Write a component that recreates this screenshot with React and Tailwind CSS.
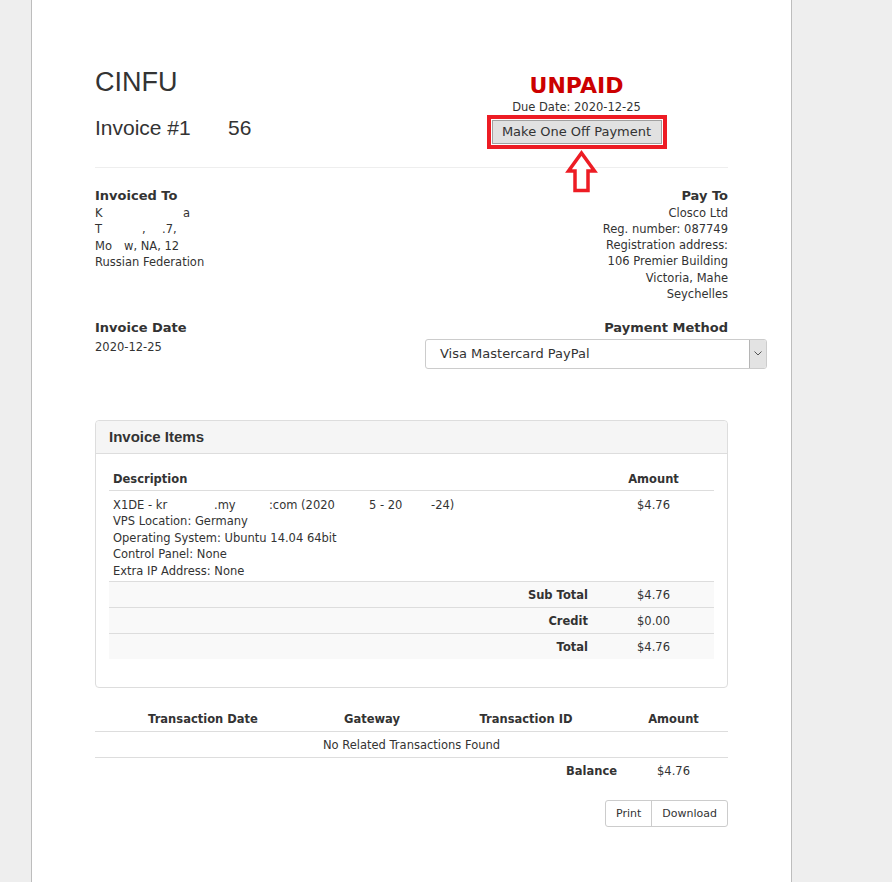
import React from "react";

const body = "font-['DejaVu_Sans',Verdana,sans-serif]";
const arial = "font-['Liberation_Sans',Arial,sans-serif]";

function UpArrow() {
  return (
    <svg
      className="absolute left-[72px] top-[29px]"
      width="38"
      height="46"
      viewBox="0 0 38 46"
    >
      <polygon
        points="18.5,5 31.5,23 25,23 25,42.5 12,42.5 12,23 5.5,23"
        fill="white"
        stroke="#ed1c24"
        strokeWidth="3.5"
        strokeLinejoin="miter"
      />
    </svg>
  );
}

function SumRow({ label, value }) {
  return (
    <div className="flex h-[26px] items-center border-t border-[#ddd] bg-[#f9f9f9]">
      <div className="flex-1 pr-[5px] text-right font-bold">{label}</div>
      <div className="w-[121px] text-center">{value}</div>
    </div>
  );
}

export default function App() {
  return (
    <div className={`min-h-screen bg-[#eeeeee] ${body} text-[11.5px] leading-[16.5px] text-[#333]`}>
      <div className="ml-[31px] min-h-screen w-[761px] border-x border-[#bdbdbd] bg-white pl-[63px] pr-[63px] pt-[67px] pb-10">
        {/* header */}
        <div className="flex items-start">
          <div className={`flex-1 ${arial}`}>
            <div className="text-[27px] leading-[31px]">CINFU</div>
            <div className="mt-[19px] whitespace-nowrap text-[21px] leading-[22px]">
              <span className="inline-block w-[133px]">Invoice #1</span>56
            </div>
          </div>
          <div className="flex w-[303px] flex-col items-center">
            <div className="mt-[5px] text-[22px] font-bold leading-[28px] text-[#cc0000]">UNPAID</div>
            <div className="leading-[14px]">Due Date: 2020-12-25</div>
            <div className="relative mt-px border-4 border-[#ed1c24] p-px">
              <div className="flex h-[24px] w-[170px] items-center justify-center border border-[#a0a0a0] bg-[#e1e1e1] text-[13px] text-[#333]">
                Make One Off Payment
              </div>
              <UpArrow />
            </div>
          </div>
        </div>

        <div className="mt-[18px] border-t border-[#eee]" />

        {/* addresses */}
        <div className="mt-[20px] flex items-start justify-between">
          <div>
            <div className="text-[13px] font-bold">Invoiced To</div>
            <div className="whitespace-nowrap">
              <span className="inline-block w-[88px]">K</span>a
            </div>
            <div className="whitespace-nowrap">
              <span className="inline-block w-[47px]">T</span>
              <span className="inline-block w-[20px]">,</span>.7,
            </div>
            <div className="whitespace-nowrap">
              <span className="inline-block w-[29px]">Mo</span>w, NA, 12
            </div>
            <div>Russian Federation</div>
          </div>
          <div className="text-right leading-[16.3px]">
            <div className="text-[13px] font-bold leading-[16.5px]">Pay To</div>
            <div>Closco Ltd</div>
            <div>Reg. number: 087749</div>
            <div>Registration address:</div>
            <div>106 Premier Building</div>
            <div>Victoria, Mahe</div>
            <div>Seychelles</div>
          </div>
        </div>

        {/* date + payment method */}
        <div className="mt-[18px] flex items-start">
          <div className="flex-1">
            <div className="text-[13px] font-bold">Invoice Date</div>
            <div className="mt-[2.5px]">2020-12-25</div>
          </div>
          <div className="w-[303px]">
            <div className="text-right text-[13px] font-bold">Payment Method</div>
            <div className="mt-[2px] flex h-[30px] w-[342px] items-stretch rounded-[3px] border border-[#ccc] bg-white">
              <div className="flex flex-1 items-center pl-[14px] text-[13px] text-[#333]">
                Visa Mastercard PayPal
              </div>
              <div className="flex w-[17px] items-center justify-center rounded-r-[2px] border-l border-[#b5b5b5] bg-[#e3e3e3]">
                <svg width="8" height="5" viewBox="0 0 8 5">
                  <path d="M0.5 0.5 L4 4 L7.5 0.5" fill="none" stroke="#555" strokeWidth="1" />
                </svg>
              </div>
            </div>
          </div>
        </div>

        {/* invoice items panel */}
        <div className="mt-[51px] rounded-[4px] border border-[#ddd]">
          <div className={`flex h-[33px] items-center rounded-t-[4px] border-b border-[#ddd] bg-[#f5f5f5] px-[13px] ${arial} text-[15px] font-bold text-[#333]`}>
            Invoice Items
          </div>
          <div className="px-[13px] pt-[14px] pb-[28px]">
            <div className="flex h-[23px] items-center border-b border-[#ddd] font-bold">
              <div className="flex-1 pl-[4px]">Description</div>
              <div className="w-[121px] text-center">Amount</div>
            </div>
            <div className="flex pt-[6px] pb-[2px]">
              <div className="flex-1 pl-[4px]">
                <div className="whitespace-nowrap">
                  <span className="inline-block w-[101px]">X1DE - kr</span>
                  <span className="inline-block w-[55px]">.my</span>
                  <span className="inline-block w-[100px]">:com (2020</span>
                  <span className="inline-block w-[62px]">5 - 20</span>-24)
                </div>
                <div>VPS Location: Germany</div>
                <div>Operating System: Ubuntu 14.04 64bit</div>
                <div>Control Panel: None</div>
                <div>Extra IP Address: None</div>
              </div>
              <div className="w-[121px] text-center">$4.76</div>
            </div>
            <SumRow label="Sub Total" value="$4.76" />
            <SumRow label="Credit" value="$0.00" />
            <SumRow label="Total" value="$4.76" />
          </div>
        </div>

        {/* transactions */}
        <div className="mt-[18px]">
          <div className="flex h-[26px] items-center border-b border-[#ddd] font-bold">
            <div className="w-[216px] text-center">Transaction Date</div>
            <div className="w-[122px] text-center">Gateway</div>
            <div className="w-[186px] text-center">Transaction ID</div>
            <div className="flex-1 text-center">Amount</div>
          </div>
          <div className="flex h-[26px] items-center justify-center border-b border-[#ddd]">
            No Related Transactions Found
          </div>
          <div className="flex h-[26px] items-center">
            <div className="w-[524px] pr-[2px] text-right font-bold">Balance</div>
            <div className="flex-1 text-center">$4.76</div>
          </div>
        </div>

        <div className="mt-[16px] flex justify-end">
          <div className="flex h-[27px] rounded-[3px] border border-[#ccc] text-[11px]">
            <div className="flex items-center border-r border-[#ccc] px-[10px]">Print</div>
            <div className="flex items-center px-[10px]">Download</div>
          </div>
        </div>
      </div>
    </div>
  );
}
